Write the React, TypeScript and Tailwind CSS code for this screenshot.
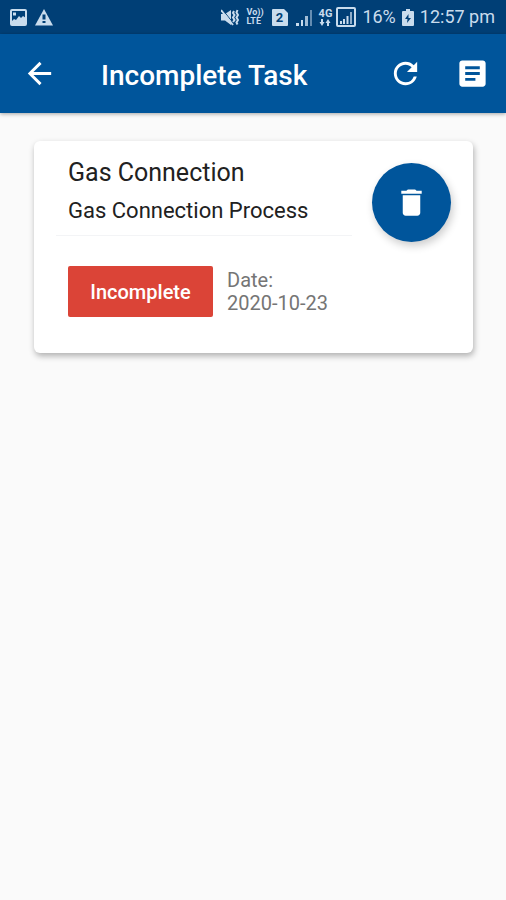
import { useState } from 'react';
import { MdArrowBack, MdArticle, MdDelete, MdRefresh } from 'react-icons/md';

type Task = {
    id: number;
    title: string;
    description: string;
    status: string;
    date: string;
};

const TASKS: Task[] = [
    {
        id: 1,
        title: 'Gas Connection',
        description: 'Gas Connection Process',
        status: 'Incomplete',
        date: '2020-10-23'
    }
];

function ImageIcon() {
    return (
        <svg viewBox="0 0 17 17" className="size-[17px]" fill="none">
            <rect
                x="1"
                y="1"
                width="15"
                height="15"
                rx="1"
                stroke="currentColor"
                strokeWidth="2"
            />
            <path
                d="M2 12l2-2 2 1 3-4 2 2 2-2 3 2v7H2z"
                fill="currentColor"
            />
            <path d="M3 3.500h3v3H3z" fill="currentColor" />
        </svg>
    );
}

function WarningIcon() {
    return (
        <svg viewBox="0 0 18 17" className="h-[17px] w-[18px]">
            <path d="M9 0l9 16.500H0z" fill="currentColor" />
            <path d="M7.500 5.500h3v5h-3zM7.500 12h3v2h-3z" fill="#003f76" />
        </svg>
    );
}

function MuteIcon() {
    return (
        <svg viewBox="0 0 18 17" className="h-[17px] w-[18px]" fill="none">
            <path d="M0 5h4l6-4v15l-6-4.500H0z" fill="currentColor" />
            <path d="M1 0l12 15" stroke="#003f76" strokeWidth="1" />
            <path d="M0 1l12 15" stroke="currentColor" strokeWidth="2" />
            <path
                d="M13 2l-1 2 1.500 2-1.500 2.500 1.500 2.500-1.500 2M16.500 1l-1 2.500 1.500 2.500-1.500 2.500 1.500 2.500-1.500 2.500 1 2"
                stroke="currentColor"
                strokeWidth="2"
            />
        </svg>
    );
}

function SimIcon() {
    return (
        <span className="relative flex h-[17px] w-4 items-center justify-center">
            <svg viewBox="0 0 16 17" className="absolute inset-0 h-[17px] w-4">
                <path
                    d="M1 0h11l4 4v12a1 1 0 0 1-1 1H1a1 1 0 0 1-1-1V1a1 1 0 0 1 1-1z"
                    fill="currentColor"
                />
            </svg>
            <span className="relative text-[13px] leading-none font-bold text-[#003f76]">
                2
            </span>
        </span>
    );
}

function SignalIcon() {
    return (
        <svg viewBox="0 0 17 17" className="size-[17px]" fill="currentColor">
            <path d="M0 14h3v3H0zM5 11h2v6H5z" />
            <path d="M9 7h3v10H9z" opacity="0.8" />
            <path d="M14 1h2v16h-2z" opacity="0.5" />
        </svg>
    );
}

function BoxedSignalIcon() {
    return (
        <svg viewBox="0 0 20 20" className="size-5" fill="currentColor">
            <rect
                x="1"
                y="1"
                width="18"
                height="18"
                rx="1"
                fill="none"
                stroke="currentColor"
                strokeWidth="2"
            />
            <path d="M4 14h2v3H4zM7 12h2v5H7zM10.500 9h2v8h-2z" />
            <path d="M14 5h2v12h-2z" opacity="0.7" />
        </svg>
    );
}

function BatteryIcon() {
    return (
        <svg viewBox="0 0 12 17" className="h-[17px] w-3">
            <path
                d="M4 0h4v2h3a1 1 0 0 1 1 1v13a1 1 0 0 1-1 1H1a1 1 0 0 1-1-1V3a1 1 0 0 1 1-1h3z"
                fill="currentColor"
            />
            <path d="M6.500 5L3 10h2.500L5 14l4-5H6.500z" fill="#003f76" />
        </svg>
    );
}

function StatusBar() {
    return (
        <div className="flex h-[34px] items-center justify-between bg-[#003f76] pr-[11px] pl-[10px] text-[#c9dced]">
            <div className="flex items-center gap-2">
                <ImageIcon />
                <WarningIcon />
            </div>
            <div className="flex items-center gap-[6px]">
                <div className="flex items-center gap-2">
                    <MuteIcon />
                    <span className="flex flex-col text-[9px] leading-[9px] font-bold">
                        <span>Vo))</span>
                        <span>LTE</span>
                    </span>
                    <SimIcon />
                    <SignalIcon />
                </div>
                <div className="flex items-center gap-1">
                    <span className="flex flex-col items-center text-[11px] leading-[10px] font-bold">
                        4G
                        <svg
                            viewBox="0 0 12 7"
                            className="h-[7px] w-3"
                            fill="currentColor"
                        >
                            <path d="M2 0h2v3h1.500L3 7 .500 3H2zM8 7h2V4h1.500L9 0 6.500 4H8z" />
                        </svg>
                    </span>
                    <BoxedSignalIcon />
                </div>
                <span className="text-lg leading-6">16%</span>
                <BatteryIcon />
                <span className="text-lg leading-6">12:57 pm</span>
            </div>
        </div>
    );
}

function Header({ onRefresh }: { onRefresh: () => void }) {
    return (
        <header className="relative flex h-[79px] items-center bg-[#00559b] pr-4 pl-[22px] text-white shadow-[0_1px_4px_rgba(0,0,0,0.35)]">
            <button type="button" aria-label="Back">
                <MdArrowBack className="size-[35px]" />
            </button>
            <h1 className="ml-11 flex-1 pt-1 text-[28px] leading-8 font-medium">
                Incomplete Task
            </h1>
            <div className="flex items-center gap-8">
                <button type="button" aria-label="Refresh" onClick={onRefresh}>
                    <MdRefresh className="size-[35px]" />
                </button>
                <button type="button" aria-label="Task details">
                    <MdArticle className="size-[35px]" />
                </button>
            </div>
        </header>
    );
}

function TaskCard({ task, onDelete }: { task: Task; onDelete: () => void }) {
    return (
        <article className="flex items-start justify-between rounded-md bg-white pt-[14px] pr-[22px] pb-9 pl-[22px] shadow-[1px_3px_6px_rgba(0,0,0,0.3)]">
            <div className="w-[296px]">
                <div className="border-b border-gray-100 px-3 pb-2">
                    <h2 className="text-[25px] leading-9 text-[#212121]">
                        {task.title}
                    </h2>
                    <p className="mt-1 text-[22px] leading-8 text-[#212121]">
                        {task.description}
                    </p>
                </div>
                <div className="mt-[30px] flex items-center gap-[14px] px-3">
                    <button
                        type="button"
                        className="h-[51px] w-[145px] rounded-xs bg-[#db4437] text-xl font-medium text-white"
                    >
                        {task.status}
                    </button>
                    <p className="text-xl leading-[23px] text-[#757575]">
                        Date:
                        <br />
                        {task.date}
                    </p>
                </div>
            </div>
            <button
                type="button"
                aria-label="Delete task"
                onClick={onDelete}
                className="mt-2 flex size-[79px] items-center justify-center rounded-full bg-[#00559b] text-white shadow-[2px_4px_8px_rgba(0,0,0,0.2)]"
            >
                <MdDelete className="size-[35px]" />
            </button>
        </article>
    );
}

export default function App() {
    const [tasks, setTasks] = useState<Task[]>(TASKS);

    const deleteTask = (id: number) => {
        setTasks(tasks.filter((task) => task.id !== id));
    };

    return (
        <div className="min-h-screen bg-[#fafafa] font-[Roboto,sans-serif]">
            <StatusBar />
            <Header onRefresh={() => setTasks(TASKS)} />
            <main className="flex flex-col gap-4 py-7 pr-[33px] pl-[34px]">
                {tasks.map((task) => (
                    <TaskCard
                        key={task.id}
                        task={task}
                        onDelete={() => deleteTask(task.id)}
                    />
                ))}
            </main>
        </div>
    );
}
